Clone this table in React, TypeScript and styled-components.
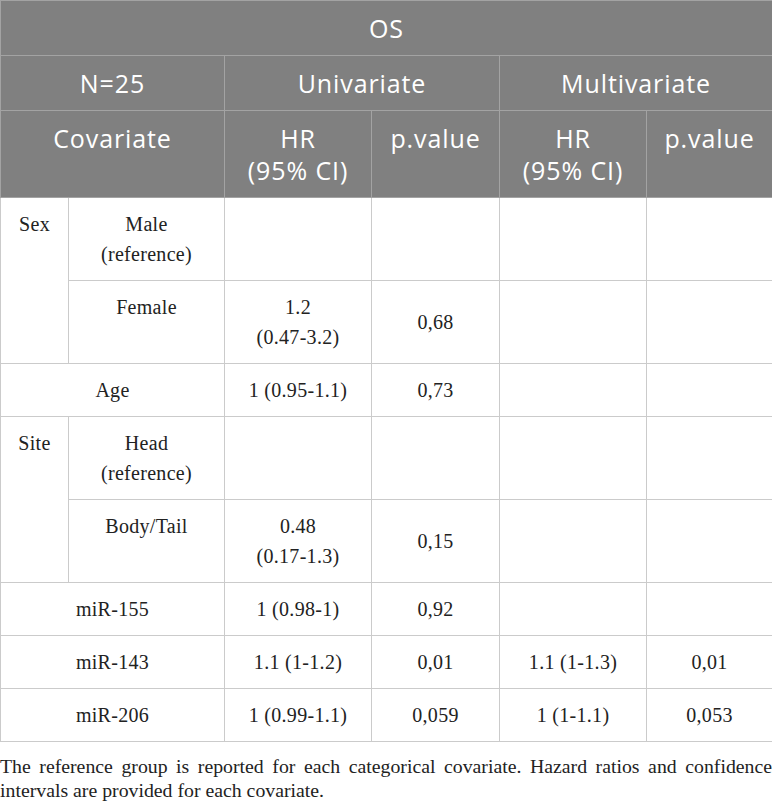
import React from 'react';
import styled, { createGlobalStyle } from 'styled-components';

const Global = createGlobalStyle`
  html, body { margin: 0; padding: 0; background: #fff; }
`;

const Page = styled.div`
  width: 772px;
`;

const Table = styled.table`
  width: 772px;
  border-collapse: collapse;
  table-layout: fixed;
`;

const Head = styled.th`
  background: #808080;
  color: #fff;
  font-family: 'Open Sans', 'Noto Sans', sans-serif;
  font-weight: 400;
  font-size: 25px;
  letter-spacing: 0.9px;
  line-height: 32px;
  padding: 11px 4px;
  border: 1px solid #a3a3a3;
  text-align: center;
  vertical-align: top;
`;

const Cell = styled.td<{ mid?: boolean }>`
  font-family: 'Liberation Serif', 'Times New Roman', serif;
  font-size: 20px;
  letter-spacing: 0.3px;
  line-height: 30px;
  color: #222;
  padding: 11px 4px;
  border: 1px solid #cbcbcb;
  text-align: center;
  vertical-align: ${p => (p.mid ? 'middle' : 'top')};
`;

const Caption = styled.p`
  margin: 12px 0 0;
  font-family: 'Liberation Serif', 'Times New Roman', serif;
  font-size: 19.8px;
  line-height: 24px;
  color: #222;
  text-align: justify;
`;

type Row = { label: string; uhr?: string; up?: string; mhr?: string; mp?: string };

const single: Row[] = [
  { label: 'miR-155', uhr: '1 (0.98-1)', up: '0,92' },
  { label: 'miR-143', uhr: '1.1 (1-1.2)', up: '0,01', mhr: '1.1 (1-1.3)', mp: '0,01' },
  { label: 'miR-206', uhr: '1 (0.99-1.1)', up: '0,059', mhr: '1 (1-1.1)', mp: '0,053' },
];

export default function App() {
  return (
    <Page>
      <Global />
      <Table>
        <colgroup>
          <col style={{ width: 68 }} />
          <col style={{ width: 156 }} />
          <col style={{ width: 147 }} />
          <col style={{ width: 128 }} />
          <col style={{ width: 147 }} />
          <col style={{ width: 126 }} />
        </colgroup>
        <thead>
          <tr>
            <Head colSpan={6}>OS</Head>
          </tr>
          <tr>
            <Head colSpan={2}>N=25</Head>
            <Head colSpan={2}>Univariate</Head>
            <Head colSpan={2}>Multivariate</Head>
          </tr>
          <tr>
            <Head colSpan={2}>Covariate</Head>
            <Head>HR<br />(95% CI)</Head>
            <Head>p.value</Head>
            <Head>HR<br />(95% CI)</Head>
            <Head>p.value</Head>
          </tr>
        </thead>
        <tbody>
          <tr>
            <Cell rowSpan={2}>Sex</Cell>
            <Cell>Male<br />(reference)</Cell>
            <Cell />
            <Cell />
            <Cell />
            <Cell />
          </tr>
          <tr>
            <Cell>Female</Cell>
            <Cell>1.2<br />(0.47-3.2)</Cell>
            <Cell mid>0,68</Cell>
            <Cell />
            <Cell />
          </tr>
          <tr>
            <Cell colSpan={2}>Age</Cell>
            <Cell>1 (0.95-1.1)</Cell>
            <Cell>0,73</Cell>
            <Cell />
            <Cell />
          </tr>
          <tr>
            <Cell rowSpan={2}>Site</Cell>
            <Cell>Head<br />(reference)</Cell>
            <Cell />
            <Cell />
            <Cell />
            <Cell />
          </tr>
          <tr>
            <Cell>Body/Tail</Cell>
            <Cell>0.48<br />(0.17-1.3)</Cell>
            <Cell mid>0,15</Cell>
            <Cell />
            <Cell />
          </tr>
          {single.map(r => (
            <tr key={r.label}>
              <Cell colSpan={2}>{r.label}</Cell>
              <Cell>{r.uhr}</Cell>
              <Cell>{r.up}</Cell>
              <Cell>{r.mhr}</Cell>
              <Cell>{r.mp}</Cell>
            </tr>
          ))}
        </tbody>
      </Table>
      <Caption>
        The reference group is reported for each categorical covariate. Hazard ratios and confidence
        intervals are provided for each covariate.
      </Caption>
    </Page>
  );
}
